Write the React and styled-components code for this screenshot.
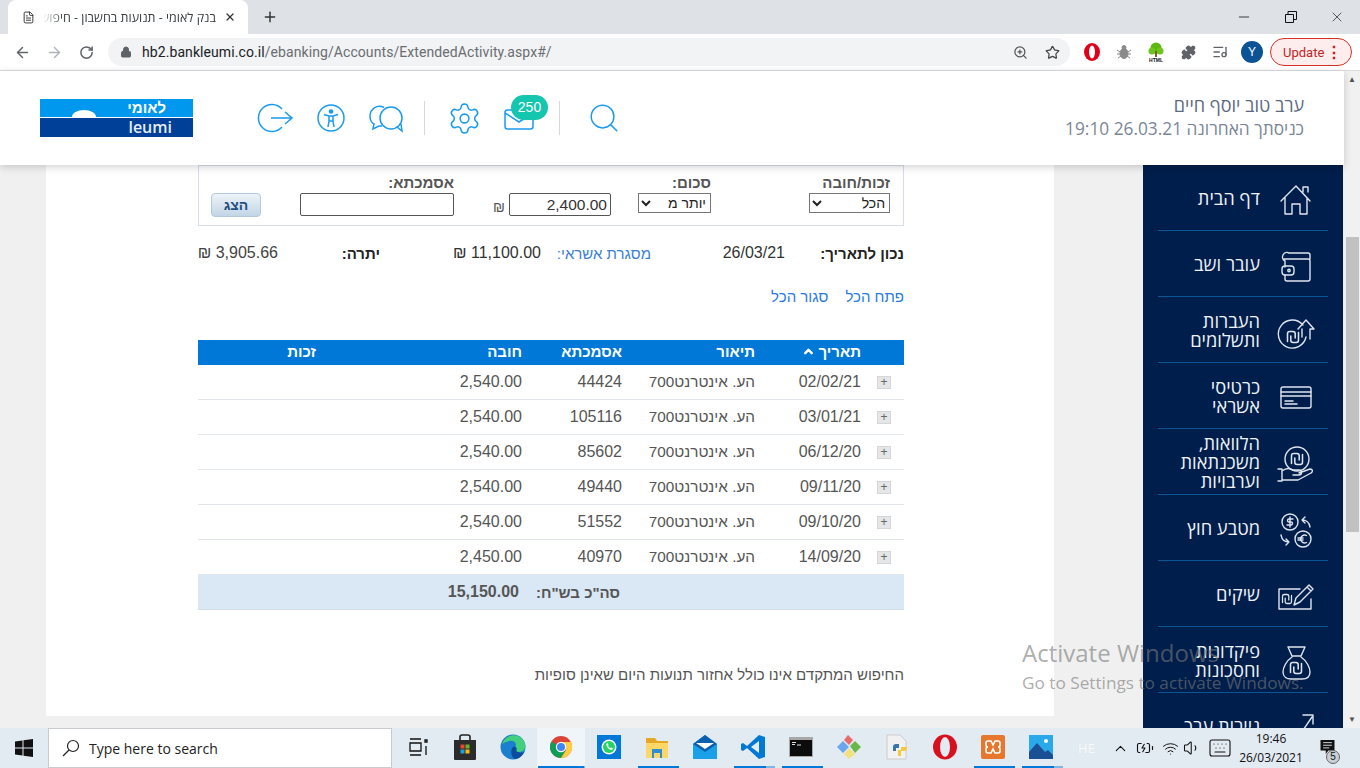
import React from 'react'
import styled, { createGlobalStyle } from 'styled-components'
import {
    ArrowLeft, ArrowRight, RotateCw, Lock, ZoomIn, Star, Puzzle, ListMusic, X, Plus, Minus,
    Search, Settings, ChevronUp, Wifi, Volume1, Keyboard, BatteryCharging, FileText,
} from 'lucide-react'

const GlobalStyle = createGlobalStyle`
    html, body { margin: 0; padding: 0; height: 100%; overflow: hidden; }
    #root { height: 100%; }
    * { box-sizing: border-box; }
`

const rows = [
    { date: '02/02/21', ref: '44424', debit: '2,540.00' },
    { date: '03/01/21', ref: '105116', debit: '2,540.00' },
    { date: '06/12/20', ref: '85602', debit: '2,540.00' },
    { date: '09/11/20', ref: '49440', debit: '2,540.00' },
    { date: '09/10/20', ref: '51552', debit: '2,540.00' },
    { date: '14/09/20', ref: '40970', debit: '2,450.00' },
]

const NavSvg = ({ children }) => (
    <svg width="40" height="40" viewBox="0 0 40 40" fill="none" stroke="#dfe5ee" strokeWidth="1.4" strokeLinejoin="round" strokeLinecap="round">
        {children}
    </svg>
)

const Swirl = ({ x, y, s = 1 }) => (
    <path transform={`translate(${x} ${y}) scale(${s})`} d="M-5 4V-3a2 2 0 0 1 2-2h3a2 2 0 0 1 2 2v4M5 -4V3a2 2 0 0 1-2 2H0a2 2 0 0 1-2-2V-1" />
)

const navItems = [
    { label: ['דף הבית'], icon: <path d="M5 20 20 5l14 15M9 17v16h7v-10h8v10h7V17M27 11V6h5v5" /> },
    { label: ['עובר ושב'], icon: <><path d="M8 12h24a2 2 0 0 1 2 2v18a2 2 0 0 1-2 2H11a2 2 0 0 1-2-2v-4M9 20v-6a4 4 0 0 1 4-8h19a2 2 0 0 1 2 2v4" /><rect x="6" y="19" width="12" height="9" rx="3" /><circle cx="13" cy="23.5" r="1.2" /></> },
    { label: ['העברות', 'ותשלומים'], icon: <><path d="M27 12a14 14 0 1 0 3 12M22 16 30 7l8 9h-4v10M26 16v8" /><Swirl x={17} y={24} s={1.1} /></> },
    { label: ['כרטיסי', 'אשראי'], icon: <><rect x="5" y="8" width="30" height="21" rx="2" /><path d="M5 13h30M5 17h30M9 22h8M9 25h12" /></> },
    { label: ['הלוואות,', 'משכנתאות', 'וערבויות'], icon: <><circle cx="21" cy="14" r="12" /><Swirl x={21} y={14} s={1.1} /><path d="M2 24h4v12H2M6 26c4-3 8-3 11-1h6a2 2 0 0 1 0 5h-6M23 28l11-4c3 0 3 3 1 4l-13 7H6" /></> },
    { label: ['מטבע חוץ'], icon: <><circle cx="14" cy="11" r="8" /><circle cx="27" cy="28" r="8" /><path d="M17 8h-4a1.500 1.500 0 0 0 0 3h2a1.500 1.500 0 0 1 0 3h-4M14 6v10M30.500 24.500a4 4 0 1 0 0 7M22 27h5M22 29h5M26 9c5 0 7 2 8 7M26 9l3-3M26 9l3 3M13 31c-5 0-7-2-8-7M13 31l-3 3M13 31l-3-3" /></> },
    { label: ['שיקים'], icon: <><path d="M24 12H3v20h32V22" /><Swirl x={11} y={22} s={0.9} /><path d="M18 28l2-7L33 8l4 4-13 13-6 3ZM31 10l4 4" /></> },
    { label: ['פיקדונות', 'וחסכונות'], icon: <><path d="M12 4h17l-4 9h-9ZM16 13h9M16 14C10 18 7 25 7 29c0 5 4 7 8 7h11c5 0 8-2 8-7 0-4-3-11-9-15" /><Swirl x={20} y={25} s={1.1} /></> },
    { label: ['ניירות ערך'], icon: <path d="M3 36 14 24l7 6L36 8M27 6h10v9" /> },
]

const taskIcons = [
    { key: 'view', icon: <svg width="24" height="24" viewBox="0 0 24 24" fill="none" stroke="#111" strokeWidth="1.3"><path d="M5 4h11M5 20h11M5 8h11v8H5ZM20 5h2v2h-2ZM21 11v9" /></svg> },
    { key: 'store', icon: <svg width="24" height="26" viewBox="0 0 24 26"><path d="M7 7V3a2 2 0 0 1 2-2h6a2 2 0 0 1 2 2v4" fill="none" stroke="#222" strokeWidth="1.6" /><path d="M1 6h22v19a1 1 0 0 1-1 1H2a1 1 0 0 1-1-1Z" fill="#2b2b2b" /><path d="M7.500 10.500h4v4h-4Z" fill="#e8492b" /><path d="M12.500 10.500h4v4h-4Z" fill="#6ab42d" /><path d="M7.500 15.500h4v4h-4Z" fill="#1ba1e2" /><path d="M12.500 15.500h4v4h-4Z" fill="#fbbc09" /></svg> },
    { key: 'edge', icon: <svg width="26" height="26" viewBox="0 0 26 26"><circle cx="13" cy="13" r="12.500" fill="#1a7fcf" /><path d="M2 10C5 1 17-2 23 6c3 4 3 9 0 11-4 2-9 1-9-2 0-2 2-2 2-4 0-3-3-5-7-4-3 1-6 2-7 3Z" fill="#42d07c" /><path d="M13 13c3-2 5 3 3 4 3 2 6 2 8 1-2 4-5 7-9 7-4-2-5-9-2-12Z" fill="#0b4d9c" /></svg> },
    { key: 'chrome', run: 'active', active: true, icon: <svg width="24" height="24" viewBox="0 0 24 24"><circle cx="12" cy="12" r="11" fill="#db4437" /><path d="M12 12 2.500 6.500A11 11 0 0 0 12 23l5-8Z" fill="#0f9d58" /><path d="M12 7h10a11 11 0 0 1-10 16l5-8Z" fill="#ffcd40" /><circle cx="12" cy="12" r="5.200" fill="#fff" /><circle cx="12" cy="12" r="4" fill="#4285f4" /></svg> },
    { key: 'whatsapp', icon: <svg width="24" height="24" viewBox="0 0 24 24"><rect width="24" height="24" fill="#0078d7" /><circle cx="12" cy="12" r="7.500" fill="#fff" /><circle cx="12" cy="12" r="6" fill="#25d366" /><path d="M9.500 8.500c-1 2 2 6.500 5.500 6.500l1-1.500-2-1-1 .7-2-2.200.6-1L10.500 8Z" fill="#fff" /></svg> },
    { key: 'explorer', run: 'one', icon: <svg width="24" height="24" viewBox="0 0 24 24"><path d="M1 3h9l2 3h11v17H1Z" fill="#e5a823" /><path d="M1 8h22v15H1Z" fill="#ffd766" /><path d="M7 14h10v9h-2v-5H9v5H7Z" fill="#2e8fd6" /></svg> },
    { key: 'mail', icon: <svg width="26" height="26" viewBox="0 0 26 26"><path d="M1 10 13 1l12 9v15H1Z" fill="#1aa0e8" /><path d="M1 10l12 8 12-8-12-9Z" fill="#0a5fae" /><path d="M4 9h18l-9 6Z" fill="#fff" /></svg> },
    { key: 'vscode', run: 'many', icon: <svg width="24" height="26" viewBox="0 0 24 26"><path d="M18 1 6 12 2 9 0 10v6l2 1 4-3 12 11 6-2V3Z" fill="#0078d4" /><path d="M18 7v12l-8-6Z" fill="#e4ebf2" /></svg> },
    { key: 'cmd', run: 'one', icon: <svg width="24" height="20" viewBox="0 0 24 20"><rect width="24" height="20" fill="#a8a8a8" /><rect x="1" y="3" width="22" height="16" fill="#0c0c0c" /><path d="M3 5.500h4M3 7.500h3M8 8h4" stroke="#ddd" /></svg> },
    { key: 'kraken', icon: <svg width="26" height="26" viewBox="0 0 26 26"><path d="M1 13 7 7l6 6-6 6Z" fill="#6aa5f0" /><path d="M8 6 12 1l5 5-4 5Z" fill="#e86a6a" /><path d="M14 12l5-5 6 6-6 6Z" fill="#68b84a" /><path d="M8 20l5-6 6 6-6 5Z" fill="#f3e27c" /></svg> },
    { key: 'python', icon: <svg width="22" height="26" viewBox="0 0 22 26"><path d="M1 1h13l6 6v18H1Z" fill="#f1f1f1" stroke="#ccc" /><path d="M7 13a3 3 0 0 1 3-3h3v4h-3v3H7Z" fill="#3776ab" /><path d="M21 14a3 3 0 0 1-3 3h-3v5h-3v-6h3v-3h6Z" fill="#f5c93e" /></svg> },
    { key: 'opera', icon: <svg width="24" height="26" viewBox="0 0 24 26"><ellipse cx="12" cy="13" rx="12" ry="12.500" fill="#d8101e" /><ellipse cx="12" cy="13" rx="5" ry="10" fill="#e2eaf2" /></svg> },
    { key: 'xampp', run: 'one', icon: <svg width="24" height="24" viewBox="0 0 24 24"><rect width="24" height="24" rx="2" fill="#e8772e" /><path d="M7 6h3l2 4 2-4h3a2 2 0 0 1 2 2v2a2 2 0 0 1-2 2 2 2 0 0 1 2 2v2a2 2 0 0 1-2 2h-3l-2-4-2 4H7a2 2 0 0 1-2-2v-2a2 2 0 0 1 2-2 2 2 0 0 1-2-2V8a2 2 0 0 1 2-2Z" fill="none" stroke="#fff" strokeWidth="1.600" /></svg> },
    { key: 'photos', run: 'many', icon: <svg width="24" height="24" viewBox="0 0 24 24"><rect width="24" height="24" fill="#29a9ea" /><path d="M0 24V17L8 8l8 9 3-2 5 5v4Z" fill="#1b4f94" /><circle cx="17" cy="6" r="2" fill="#fff" /></svg> },
]

// underline under running apps, chrome and multi window apps get a lighter tail
const runLine = {
    active: 'linear-gradient(to right, transparent 2px, #0078d7 2px, #0078d7 46px, #7fb6e6 46px) 1',
    one: 'linear-gradient(to right, transparent 6px, #0078d7 6px, #0078d7 45px, transparent 45px) 1',
    many: 'linear-gradient(to right, transparent 6px, #0078d7 6px, #0078d7 36px, #7fb6e6 36px, #7fb6e6 45px, transparent 45px) 1',
}

const App = () => (
    <>
        <GlobalStyle />
        <Shell>
            <TabStrip>
                <Tab>
                    <FileText size={13} color="#222" strokeWidth={1.6} />
                    <TabTitle dir="rtl">בנק לאומי - תנועות בחשבון - חיפוש</TabTitle>
                    <X size={12} color="#333" strokeWidth={2.4} />
                </Tab>
                <NewTab><Plus size={16} strokeWidth={2.2} /></NewTab>
                <WindowControls>
                    <Minus size={16} strokeWidth={1.2} />
                    <svg width="12" height="12" viewBox="0 0 12 12" fill="none" stroke="#111"><path d="M.5 3.500h8v8h-8ZM3 3.500V.5h8.500v8H8.500" /></svg>
                    <X size={16} strokeWidth={1} />
                </WindowControls>
            </TabStrip>
            <Toolbar>
                <NavButton><ArrowLeft size={17} /></NavButton>
                <NavButton $muted><ArrowRight size={17} /></NavButton>
                <NavButton><RotateCw size={15} strokeWidth={2.4} /></NavButton>
                <AddressBar>
                    <Lock size={12} fill="#5f6368" color="#5f6368" />
                    <Url><b>hb2.bankleumi.co.il</b>/ebanking/Accounts/ExtendedActivity.aspx#/</Url>
                    <AddressIcons>
                        <ZoomIn size={15} color="#555" />
                        <Star size={15} color="#444" />
                    </AddressIcons>
                </AddressBar>
                <Extensions>
                    <ExtSlot>
                        <svg width="16" height="18" viewBox="0 0 16 18"><ellipse cx="8" cy="9" rx="8" ry="9" fill="#e0001b" /><ellipse cx="8" cy="9" rx="3" ry="6.500" fill="#fff" /></svg>
                    </ExtSlot>
                    <ExtSlot>
                        <svg width="16" height="16" viewBox="0 0 16 16" stroke="#8a8a8a"><ellipse cx="8" cy="9.500" rx="4" ry="5" fill="#8a8a8a" /><circle cx="8" cy="3.500" r="2" fill="#8a8a8a" /><path d="M1 6l3 2M15 6l-3 2M1 10h3M15 10h-3M2 14l3-2M14 14l-3-2" /></svg>
                    </ExtSlot>
                    <ExtSlot>
                        <svg width="18" height="20" viewBox="0 0 18 20"><circle cx="9" cy="6" r="5.500" fill="#5cb811" /><circle cx="5" cy="9" r="3.500" fill="#6cc51d" /><circle cx="13" cy="9" r="3.500" fill="#6cc51d" /><path d="M8 9h2v6H8Z" fill="#8a5a20" /><text x="9" y="19.500" fontSize="5" fontWeight="700" textAnchor="middle" fontFamily="Liberation Sans" fill="#111">HTML</text></svg>
                    </ExtSlot>
                    <ExtSlot><Puzzle size={15} fill="#5f6368" color="#5f6368" /></ExtSlot>
                    <ExtSlot><ListMusic size={16} color="#5f6368" /></ExtSlot>
                    <Avatar>Y</Avatar>
                    <UpdatePill>Update<PillDots>⋮</PillDots></UpdatePill>
                </Extensions>
            </Toolbar>
            <Viewport>
                <PageColumn>
                    <Header>
                        <Logo>
                            <LogoTop>
                                <LogoSun />
                                <span>לאומי</span>
                            </LogoTop>
                            <LogoBottom>leumi</LogoBottom>
                        </Logo>
                        <HeaderIcons>
                            <svg width="38" height="30" viewBox="0 0 38 30" fill="none" stroke="#1a9bf0" strokeWidth="1.5">
                                <path d="M26 6A13.500 13.500 0 1 0 26 24M15 15h21M29 9l7 6-7 6" />
                            </svg>
                            <IconGap $w={23} />
                            <svg width="28" height="30" viewBox="0 0 28 30" fill="none" stroke="#1a9bf0" strokeWidth="1.500">
                                <circle cx="14" cy="15" r="13" />
                                <circle cx="14" cy="8.500" r="1.600" fill="#1a9bf0" />
                                <path d="M7 11.500l5 1.500h4l5-1.500M12 13v5l-1 6M16 13v5l1 6M12 18h4" />
                            </svg>
                            <IconGap $w={24} />
                            <svg width="35" height="30" viewBox="0 0 35 30" fill="none" stroke="#1a9bf0" strokeWidth="1.500">
                                <path d="M15 4.500C8 1 1 6 1 13c0 4 2 7 4 8l-1 5 6-3h3" />
                                <circle cx="22" cy="15" r="11" />
                                <path d="M28 24l5 4-1-7" />
                            </svg>
                            <HeaderDivider $left={20} $right={22} />
                            <Settings size={35} color="#1a9bf0" strokeWidth={1.05} />
                            <MailWrap>
                                <svg width="30" height="21" viewBox="0 0 30 21" fill="none" stroke="#1a9bf0" strokeWidth="1.500">
                                    <rect x="1" y="1" width="28" height="19" rx="2.500" />
                                    <path d="M1 4l14 9 14-9" />
                                </svg>
                                <Badge>250</Badge>
                            </MailWrap>
                            <HeaderDivider $left={25} $right={27} />
                            <Search size={34} color="#1a9bf0" strokeWidth={1.05} />
                        </HeaderIcons>
                        <Greeting dir="rtl">
                            <GreetName>ערב טוב יוסף חיים</GreetName>
                            <GreetLast>כניסתך האחרונה 26.03.21 19:10</GreetLast>
                        </Greeting>
                    </Header>
                    <PageBody>
                        <Content dir="rtl">
                            <FilterBox>
                                <FilterCol $w={81} $gap={98}>
                                    <FilterLabel>זכות/חובה</FilterLabel>
                                    <Select $w={81}><option>הכל</option></Select>
                                </FilterCol>
                                <FilterCol $w={73} $gap={27}>
                                    <FilterLabel>סכום:</FilterLabel>
                                    <Select $w={73}><option>יותר מ</option></Select>
                                </FilterCol>
                                <AmountCol>
                                    <TextInput $w={102} defaultValue="2,400.00" />
                                    <span>₪</span>
                                </AmountCol>
                                <FilterCol $w={154} $gap={39}>
                                    <FilterLabel>אסמכתא:</FilterLabel>
                                    <TextInput $w={154} />
                                </FilterCol>
                                <ShowButton>הצג</ShowButton>
                            </FilterBox>
                            <Summary>
                                <SummaryLabel $w={119}>נכון לתאריך:</SummaryLabel>
                                <SummaryValue $w={134}>26/03/21</SummaryValue>
                                <CreditLink>מסגרת אשראי:</CreditLink>
                                <SummaryValue $w={161}>11,100.00 ₪</SummaryValue>
                                <SummaryLabel $w={102}>יתרה:</SummaryLabel>
                                <BalanceValue>3,905.66 ₪</BalanceValue>
                            </Summary>
                            <Links>
                                <TextLink>פתח הכל</TextLink>
                                <TextLink>סגור הכל</TextLink>
                            </Links>
                            <TableHead>
                                <span>תאריך<SortArrow><ChevronUp size={13} strokeWidth={4.5} /></SortArrow></span>
                                <span>תיאור</span>
                                <span>אסמכתא</span>
                                <span>חובה</span>
                                <span>זכות</span>
                            </TableHead>
                            {rows.map(r => (
                                <TableRow key={r.ref}>
                                    <DateCell><Expander>+</Expander>{r.date}</DateCell>
                                    <DescCell>הע. אינטרנט700</DescCell>
                                    <span>{r.ref}</span>
                                    <span>{r.debit}</span>
                                    <span />
                                </TableRow>
                            ))}
                            <TotalRow>
                                <TotalLabel>סה"כ בש"ח:</TotalLabel>
                                <span>15,150.00</span>
                            </TotalRow>
                            <Note>החיפוש המתקדם אינו כולל אחזור תנועות היום שאינן סופיות</Note>
                        </Content>
                        <SideNav dir="rtl">
                            {navItems.map(item => (
                                <SideItem key={item.label[0]}>
                                    <SideIcon><NavSvg>{item.icon}</NavSvg></SideIcon>
                                    <SideLabel>{item.label.map(l => <div key={l}>{l}</div>)}</SideLabel>
                                </SideItem>
                            ))}
                        </SideNav>
                    </PageBody>
                    <Watermark>
                        <WatermarkTitle>Activate Windows</WatermarkTitle>
                        <WatermarkSub>Go to Settings to activate Windows.</WatermarkSub>
                    </Watermark>
                </PageColumn>
                <Scrollbar>
                    <ScrollArrow>▲</ScrollArrow>
                    <ScrollThumb />
                    <ScrollArrow>▼</ScrollArrow>
                </Scrollbar>
            </Viewport>
            <Taskbar>
                <StartButton>
                    <svg width="18" height="18" viewBox="0 0 18 18" fill="#111"><path d="M0 2.500 7.500 1.400V8.500H0ZM8.500 1.300 18 0V8.500H8.500ZM0 9.500H7.500V16.600L0 15.500ZM8.500 9.500H18V18L8.500 16.700Z" /></svg>
                </StartButton>
                <SearchBox>
                    <svg width="18" height="18" viewBox="0 0 18 18" fill="none" stroke="#222" strokeWidth="1.200"><circle cx="11" cy="7" r="5.500" /><path d="M7 11 1 17" /></svg>
                    <span>Type here to search</span>
                </SearchBox>
                {taskIcons.map(t => (
                    <TaskCell key={t.key} $active={t.active} $run={t.run}>{t.icon}</TaskCell>
                ))}
                <TrayCell $w={43}><LangMark>HE</LangMark></TrayCell>
                <TrayCell $w={25}><ChevronUp size={17} color="#111" strokeWidth={1.5} /></TrayCell>
                <TrayCell $w={24}><BatteryCharging size={18} color="#111" strokeWidth={1.5} /></TrayCell>
                <TrayCell $w={26}><Wifi size={17} color="#111" strokeWidth={1.4} /></TrayCell>
                <TrayCell $w={18}><Volume1 size={18} color="#111" strokeWidth={1.4} /></TrayCell>
                <TrayCell $w={38}><Keyboard size={24} color="#111" strokeWidth={1.1} /></TrayCell>
                <Clock>
                    <div>19:46</div>
                    <div>26/03/2021</div>
                </Clock>
                <Notify>
                    <svg width="15" height="14" viewBox="0 0 16 16"><path d="M0 0h16v12H9l-3 4v-4H0Z" fill="#111" /><path d="M3 3h10M3 6h10M3 9h7" stroke="#e3ebf3" /></svg>
                    <NotifyCount>5</NotifyCount>
                </Notify>
            </Taskbar>
        </Shell>
    </>
)

export default App

const Shell = styled.div`
    height: 768px;
    width: 1360px;
    display: flex;
    flex-direction: column;
    overflow: hidden;
    font-family: "Liberation Sans", Arial, sans-serif;
`
const TabStrip = styled.div`
    height: 34px;
    flex: none;
    background-color: #dee1e6;
    display: flex;
    align-items: flex-end;
    padding-left: 8px;
`
const Tab = styled.div`
    width: 240px;
    height: 34px;
    background-color: #fff;
    border-radius: 8px 8px 0 0;
    display: flex;
    align-items: center;
    gap: 8px;
    padding: 0 12px 0 14px;
`
const TabTitle = styled.div`
    flex: 1;
    white-space: nowrap;
    overflow: hidden;
    font-size: 12.5px;
    color: #3c4043;
    font-family: "Open Sans", "Liberation Sans", sans-serif;
    mask-image: linear-gradient(to right, transparent, #000 20px);
`
const NewTab = styled.div`
    width: 28px;
    height: 34px;
    margin-left: 8px;
    display: flex;
    align-items: center;
    justify-content: center;
    color: #333;
`
const WindowControls = styled.div`
    margin-left: auto;
    width: 138px;
    height: 34px;
    display: flex;
    align-items: center;
    justify-content: space-between;
    padding: 0 15px 0 14px;
    color: #111;
`
const Toolbar = styled.div`
    height: 37px;
    flex: none;
    background-color: #fff;
    border-bottom: 1px solid #dadce0;
    display: flex;
    align-items: center;
    padding-left: 6px;
`
const NavButton = styled.div`
    width: 32px;
    display: flex;
    justify-content: center;
    color: ${p => (p.$muted ? '#b0b3b7' : '#5f6368')};
`
const AddressBar = styled.div`
    width: 962px;
    height: 28px;
    margin-left: 6px;
    background-color: #f1f3f4;
    border-radius: 14px;
    display: flex;
    align-items: center;
    padding-left: 12px;
    gap: 10px;
`
const Url = styled.div`
    font-family: Roboto, "Liberation Sans", sans-serif;
    font-size: 14px;
    color: #6a6d71;
    letter-spacing: 0.08px;
    b { font-weight: 400; color: #202124; }
`
const AddressIcons = styled.div`
    margin-left: auto;
    display: flex;
    gap: 17px;
    padding-right: 10px;
`
const Extensions = styled.div`
    display: flex;
    align-items: center;
    padding-left: 6px;
`
const ExtSlot = styled.div`
    width: 32px;
    display: flex;
    justify-content: center;
`
const Avatar = styled.div`
    width: 22px;
    height: 22px;
    margin-left: 5px;
    border-radius: 50%;
    background-color: #0b5394;
    color: #fff;
    font-size: 12px;
    display: flex;
    align-items: center;
    justify-content: center;
`
const UpdatePill = styled.div`
    width: 82px;
    height: 28px;
    margin-left: 7px;
    border: 1px solid #d93025;
    border-radius: 14px;
    background-color: #fdeeed;
    color: #c5221f;
    font-family: Roboto, sans-serif;
    font-size: 13px;
    display: flex;
    align-items: center;
    padding-left: 12px;
`
const PillDots = styled.span`
    margin-left: auto;
    padding-right: 9px;
    font-weight: 700;
    font-size: 16px;
`
const Viewport = styled.div`
    flex: 1;
    min-height: 0;
    display: flex;
`
const PageColumn = styled.div`
    position: relative;
    flex: 1;
    min-width: 0;
    display: flex;
    flex-direction: column;
    background-color: #f0f0f0;
`
const Header = styled.div`
    height: 94px;
    flex: none;
    background-color: #fff;
    box-shadow: 0 2px 8px rgba(0, 0, 0, 0.18);
    display: flex;
    align-items: center;
    padding: 0 40px;
    position: relative;
    z-index: 2;
`
const Logo = styled.div`
    width: 153px;
    height: 38px;
    flex: none;
    display: flex;
    flex-direction: column;
    gap: 1px;
`
const LogoTop = styled.div`
    position: relative;
    height: 18px;
    background-color: #0098ee;
    color: #fff;
    font-size: 15px;
    font-weight: 700;
    text-align: right;
    line-height: 17px;
    padding-right: 27px;
    overflow: hidden;
`
const LogoSun = styled.div`
    position: absolute;
    left: 32px;
    top: 11px;
    width: 24px;
    height: 7px;
    border-radius: 50% 50% 0 0 / 100% 100% 0 0;
    background-color: #fff;
`
const LogoBottom = styled.div`
    flex: 1;
    background-color: #004098;
    color: #e6edf7;
    font-family: "Open Sans", sans-serif;
    font-size: 16px;
    font-weight: 600;
    text-align: right;
    line-height: 18px;
    padding-right: 21px;
`
const HeaderIcons = styled.div`
    display: flex;
    align-items: center;
    margin-left: 63px;
    height: 34px;
`
const IconGap = styled.div`
    width: ${p => p.$w}px;
`
const HeaderDivider = styled.div`
    width: 1px;
    height: 34px;
    background-color: #d5d8dc;
    margin: 0 ${p => p.$right}px 0 ${p => p.$left}px;
`
const MailWrap = styled.div`
    position: relative;
    margin-left: 22px;
    height: 21px;
    margin-top: 2px;
`
const Badge = styled.div`
    position: absolute;
    left: 7px;
    top: -14px;
    width: 37px;
    height: 25px;
    border-radius: 13px;
    background-color: #14c6ae;
    color: #fff;
    font-size: 14px;
    display: flex;
    align-items: center;
    justify-content: center;
`
const Greeting = styled.div`
    margin-left: auto;
    color: #5d6b80;
    text-align: right;
    padding-bottom: 2px;
    font-family: "Open Sans", "Liberation Sans", sans-serif;
`
const GreetName = styled.div`
    font-size: 18px;
    line-height: 23px;
`
const GreetLast = styled.div`
    font-size: 17.3px;
    line-height: 23px;
    color: #7a8698;
`
const PageBody = styled.div`
    flex: 1;
    min-height: 0;
    display: flex;
    padding-left: 46px;
    overflow: hidden;
`
const Content = styled.div`
    width: 1008px;
    height: 551px;
    flex: none;
    background-color: #fff;
    padding: 0 150px 0 152px;
    font-size: 15px;
    color: #444;
`
const FilterBox = styled.div`
    height: 61px;
    border: 1px solid #d6dfe7;
    display: flex;
    align-items: flex-start;
    padding: 9px 13px 0 0;
`
const FilterCol = styled.div`
    width: ${p => p.$w}px;
    margin-left: ${p => p.$gap}px;
    flex: none;
`
const FilterLabel = styled.div`
    font-size: 15px;
    font-weight: 700;
    color: #555;
    line-height: 16px;
    margin-bottom: 2px;
`
const Select = styled.select`
    width: ${p => p.$w}px;
    height: 20px;
    font-family: "Liberation Sans", sans-serif;
    font-size: 14px;
    color: #222;
    background-color: #fff;
    border: 1px solid #767676;
    padding: 0;
    direction: rtl;
`
const TextInput = styled.input`
    width: ${p => p.$w}px;
    height: 23px;
    font-family: "Liberation Sans", sans-serif;
    font-size: 15.5px;
    color: #333;
    background-color: #fff;
    border: 1px solid #555;
    border-radius: 2px;
    padding: 0 3px;
    direction: rtl;
    outline: none;
`
const AmountCol = styled.div`
    width: 118px;
    margin: 18px 0 0 39px;
    flex: none;
    display: flex;
    align-items: flex-end;
    gap: 4px;
    color: #555;
    font-size: 14px;
    line-height: 18px;
`
const ShowButton = styled.button`
    width: 50px;
    height: 24px;
    margin: 18px 0 0 0;
    padding: 0;
    border: 1px solid #b5c9dc;
    border-radius: 4px;
    background: linear-gradient(#edf3f8, #c2d5e6);
    color: #1f4e80;
    font-family: "Liberation Sans", sans-serif;
    font-size: 14px;
    font-weight: 700;
`
const Summary = styled.div`
    height: 54px;
    display: flex;
    align-items: center;
`
const SummaryLabel = styled.div`
    width: ${p => p.$w}px;
    flex: none;
    font-weight: 700;
    color: #222;
`
const SummaryValue = styled.div`
    width: ${p => p.$w}px;
    flex: none;
    color: #333;
    font-size: 16px;
`
const CreditLink = styled.div`
    width: 110px;
    flex: none;
    color: #3a7fd6;
`
const BalanceValue = styled.div`
    color: #444;
    font-size: 16px;
    white-space: nowrap;
`
const Links = styled.div`
    height: 32px;
    display: flex;
    align-items: center;
    gap: 17px;
`
const TextLink = styled.a`
    color: #2a7ae2;
    font-size: 15px;
`
const TableHead = styled.div`
    margin-top: 28px;
    height: 25px;
    padding-bottom: 3px;
    background-color: #0078d7;
    color: #fff;
    font-weight: 700;
    display: grid;
    grid-template-columns: 106px 133px 100px 206px 1fr;
    align-items: center;
    padding-right: 43px;
    span { display: flex; align-items: center; }
`
const SortArrow = styled.span`
    margin-right: 3px;
`
const TableRow = styled.div`
    height: 35px;
    border-bottom: 1px solid #dfe5ea;
    display: grid;
    grid-template-columns: 106px 133px 100px 206px 1fr;
    align-items: center;
    padding-right: 43px;
    color: #555;
    font-size: 16px;
`
const DateCell = styled.div`
    position: relative;
`
const DescCell = styled.span`
    font-size: 15.3px;
`
const Expander = styled.span`
    position: absolute;
    right: -30px;
    top: 3px;
    width: 14px;
    height: 13px;
    background-color: #e4e6e8;
    border: 1px solid #d4d6d8;
    color: #666;
    font-size: 12px;
    line-height: 11px;
    text-align: center;
`
const TotalRow = styled.div`
    height: 35px;
    background-color: #dae7f5;
    border-bottom: 1px solid #d3dde7;
    display: flex;
    align-items: center;
    padding-right: 284px;
    gap: 17px;
    font-weight: 700;
    color: #555;
    font-size: 16px;
`
const TotalLabel = styled.span`
    font-size: 15px;
`
const Note = styled.div`
    margin-top: 56px;
    color: #555;
    font-size: 15px;
`
const SideNav = styled.div`
    width: 200px;
    flex: none;
    margin-left: 89px;
    height: 600px;
    background-color: #001e4b;
    padding: 0 15px;
`
const SideItem = styled.div`
    height: 66px;
    border-bottom: 1px solid #0b5595;
    display: flex;
    align-items: center;
    color: #eef2f7;
`
const SideIcon = styled.div`
    width: 68px;
    flex: none;
    display: flex;
    justify-content: center;
    padding-left: 3px;
    transform: translateY(3px);
`
const SideLabel = styled.div`
    font-family: "Open Sans", "Liberation Sans", sans-serif;
    font-size: 18.3px;
    line-height: 19px;
    white-space: nowrap;
`
const Watermark = styled.div`
    position: absolute;
    left: 1022px;
    top: 567px;
    color: rgba(120, 120, 120, 0.62);
    font-family: "Open Sans", sans-serif;
    pointer-events: none;
    z-index: 3;
    white-space: nowrap;
`
const WatermarkTitle = styled.div`
    font-size: 24px;
    line-height: 30px;
`
const WatermarkSub = styled.div`
    font-size: 17.2px;
    line-height: 30px;
`
const Scrollbar = styled.div`
    width: 16px;
    flex: none;
    background-color: #f1f1f1;
    display: flex;
    flex-direction: column;
    align-items: center;
`
const ScrollArrow = styled.div`
    height: 17px;
    font-size: 8px;
    line-height: 17px;
    color: #505050;
`
const ScrollThumb = styled.div`
    width: 13px;
    height: 295px;
    margin: 149px 0 auto;
    background-color: #c1c1c1;
`
const Taskbar = styled.div`
    height: 40px;
    flex: none;
    background-color: #e2eaf2;
    display: flex;
`
const StartButton = styled.div`
    width: 48px;
    flex: none;
    display: flex;
    align-items: center;
    justify-content: center;
`
const SearchBox = styled.div`
    width: 344px;
    flex: none;
    margin-right: 1px;
    background-color: #fff;
    border: 1px solid #c8ccd0;
    display: flex;
    align-items: center;
    gap: 9px;
    padding-left: 13px;
    font-family: "Open Sans", sans-serif;
    font-size: 14px;
    color: #222;
`
const TaskCell = styled.div`
    width: 48px;
    flex: none;
    display: flex;
    align-items: center;
    justify-content: center;
    background-color: ${p => (p.$active ? '#f0f5f9' : 'transparent')};
    border-bottom: 2px solid transparent;
    border-image: ${p => (p.$run ? runLine[p.$run] : 'none')};
`
const TrayCell = styled.div`
    width: ${p => p.$w}px;
    flex: none;
    display: flex;
    align-items: center;
    justify-content: center;
`
const LangMark = styled.div`
    font-family: "Open Sans", sans-serif;
    font-size: 13px;
    color: #f7f9fb;
`
const Clock = styled.div`
    width: 64px;
    flex: none;
    align-self: center;
    text-align: center;
    font-family: "Open Sans", sans-serif;
    font-size: 12px;
    line-height: 19px;
    color: #111;
`
const Notify = styled.div`
    position: relative;
    margin: 12px 0 0 17px;
    height: 14px;
`
const NotifyCount = styled.div`
    position: absolute;
    left: 6px;
    top: 10px;
    width: 14px;
    height: 14px;
    border-radius: 50%;
    background-color: #c9cfd5;
    border: 1px solid #666;
    font-size: 10px;
    line-height: 12px;
    text-align: center;
    color: #111;
`
